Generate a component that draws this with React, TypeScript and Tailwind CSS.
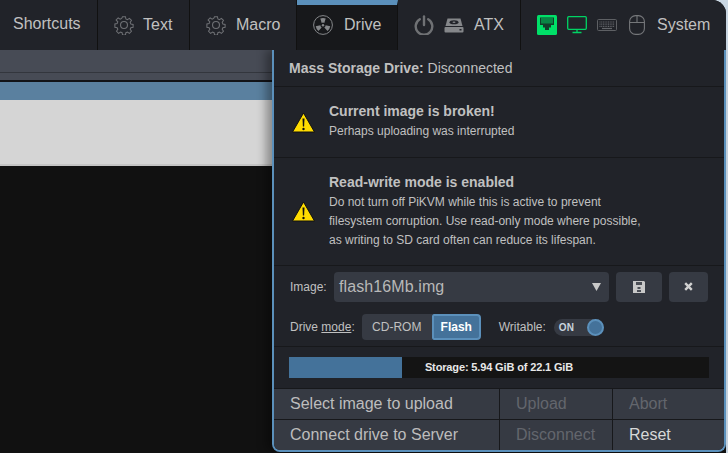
import React from "react";

const Gear = () => (
  <svg width="20" height="20" viewBox="0 0 22 22" fill="none" stroke="#6f7175" strokeWidth="1.200">
    <circle cx="11" cy="11" r="3.800" />
    <path d="M9.300 1.400h3.400l.5 2.600 1.800.8 2.300-1.500 2.400 2.400-1.500 2.300.8 1.800 2.600.5v3.400l-2.600.5-.8 1.800 1.500 2.300-2.400 2.400-2.300-1.500-1.800.8-.5 2.600H9.300l-.5-2.600-1.800-.8-2.300 1.500-2.400-2.400 1.500-2.300-.8-1.800-2.600-.5V9.700l2.600-.5.8-1.800L1.800 5.100l2.400-2.400 2.300 1.500 1.800-.8z" transform="translate(.6 .6) scale(.945)" />
  </svg>
);

const Warn = () => (
  <svg width="24" height="21" viewBox="0 0 24 21" className="shrink-0">
    <path d="M11.500 1 L22.500 20 H.5 Z" fill="#ffdc00" stroke="#111" strokeWidth="1" strokeLinejoin="round" />
    <path d="M10.500 6.500h2l-.4 8h-1.200z" fill="#111" />
    <circle cx="11.500" cy="17" r="1.200" fill="#111" />
  </svg>
);

const Tab = ({ children, className = "" }: { children: React.ReactNode; className?: string }) => (
  <div className={`h-full flex items-center border-r border-[#111] ${className}`}>{children}</div>
);

const Row = ({ children, className = "" }: { children: React.ReactNode; className?: string }) => (
  <div className={`border-b border-[#17181b] ${className}`}>{children}</div>
);

const Cell = ({ children, w, dim, bright }: { children: React.ReactNode; w: string; dim?: boolean; bright?: boolean }) => (
  <div className={`${w} flex items-center pl-4 pb-px text-[16px] border-r border-[#17181b] last:border-r-0 ${dim ? "text-[#63666d]" : bright ? "text-[#d8d8d8]" : "text-[#bdbdbd]"}`}>{children}</div>
);

export default function App() {
  return (
    <div className="w-[728px] h-[453px] overflow-hidden bg-[#c9d6e2] relative font-['Liberation_Sans',sans-serif] text-[#c0c0c0]">
      <div className="w-[726px] h-full bg-[#111111] rounded-tr-[14px]">
        {/* Menu bar */}
        <div className="h-[50px] bg-[#212329] flex text-[16px] rounded-tr-[14px] relative z-10">
          <Tab className="w-[98px] pl-[13px] pb-[2px]">Shortcuts</Tab>
          <Tab className="w-[92px] pl-[16px] gap-[9px]"><Gear />Text</Tab>
          <Tab className="w-[107px] pl-[16px] gap-[10px]"><Gear />Macro</Tab>
          <div className="w-[101px] h-full bg-[#17181b] border-r border-[#111] border-t-[5px] border-t-[#5b90bb] flex items-center pl-4 gap-[11px] pb-[5px]">
            <svg width="20" height="20" viewBox="0 0 20 20">
              <circle cx="10" cy="10" r="9.400" fill="none" stroke="#85878a" strokeWidth="1" />
              <circle cx="10" cy="10.300" r="1.200" fill="#85878a" />
              <g fill="#85878a">
                <path id="blade" d="M7.300 3.500a7 7 0 0 1 5.400 0L11.300 8a2.600 2.600 0 0 0-2.600 0z" />
                <path d="M7.300 3.500a7 7 0 0 1 5.400 0L11.300 8a2.600 2.600 0 0 0-2.600 0z" transform="rotate(120 10 10.300)" />
                <path d="M7.300 3.500a7 7 0 0 1 5.400 0L11.300 8a2.600 2.600 0 0 0-2.600 0z" transform="rotate(240 10 10.300)" />
              </g>
            </svg>
            <span>Drive</span>
          </div>
          <Tab className="w-[123px] pl-[16px]">
            <svg width="20" height="20" viewBox="0 0 20 20" fill="none" stroke="#6f7174" strokeWidth="2.400" strokeLinecap="round">
              <path d="M10 1.500v8.500" />
              <path d="M5.800 4.200a8.300 8.300 0 1 0 8.400 0" />
            </svg>
            <svg width="20" height="15" viewBox="0 0 20 15" className="ml-[10px]">
              <path d="M3.500 0.500h13L18.500 8H1.500z" fill="#85878a" />
              <ellipse cx="10" cy="4.300" rx="4.500" ry="2" fill="#212329" />
              <ellipse cx="10" cy="4.300" rx="1.500" ry=".8" fill="#85878a" />
              <rect x=".5" y="9" width="19" height="5.500" rx="1" fill="#85878a" />
              <rect x="15.500" y="11" width="2" height="1.500" fill="#212329" />
            </svg>
            <span className="ml-[10px]">ATX</span>
          </Tab>
          <div className="flex-1 h-full flex items-center pl-[16px]">
            <svg width="20" height="20" viewBox="0 0 20 20">
              <rect width="20" height="20" rx="1.500" fill="#00e068" />
              <path d="M3 2.500h14v7.500h-3v2.500h-2V15H8v-2.500H6V10H3z" fill="#123d2a" />
              <path d="M5 3v5.500M7 3v5.500M9 3v5.500M11 3v5.500M13 3v5.500M15 3v5.500" stroke="#00e068" strokeWidth=".9" />
            </svg>
            <svg width="20" height="18" viewBox="0 0 20 18" className="ml-[10px]" fill="none" stroke="#00d364" strokeWidth="1.300">
              <rect x=".7" y=".7" width="18.600" height="12.600" rx="1" />
              <path d="M10 13.500v2.500M5.500 16.500h9" />
            </svg>
            <svg width="20" height="12" viewBox="0 0 20 12" className="ml-[10px]">
              <rect x=".5" y=".5" width="19" height="11" rx="1" fill="none" stroke="#5e6064" />
              <path d="M2.500 3h15M2.500 5.200h15M2.500 7.400h15" stroke="#63656a" strokeWidth="1.200" strokeDasharray="1 .7" />
              <path d="M5 9.500h10" stroke="#63656a" strokeWidth="1.200" />
            </svg>
            <svg width="16" height="20" viewBox="0 0 16 20" className="ml-[12px]" fill="none" stroke="#75777a" strokeWidth="1.100">
              <rect x=".6" y=".6" width="14.800" height="18.800" rx="6" />
              <path d="M.6 7.500h14.800M8 .6v6.900" />
            </svg>
            <span className="ml-[12px]">System</span>
          </div>
        </div>

        {/* Background window */}
        <div>
          <div className="h-[32px] bg-[#474b55] border-b-2 border-[#121317]">
            <div className="h-[23px] border-b border-[#33363d]" />
          </div>
          <div className="h-[18px] bg-[#5a809f]" />
          <div className="h-[66px] bg-[#d5d5d5] border-b-2 border-[#c4c4c4]" />
        </div>
      </div>

      {/* Drive menu */}
      <div className="absolute left-[272px] top-[50px] w-[454px] h-[402px] bg-[#212329] border-x-2 border-b-2 border-[#5b90bb] rounded-b-[8px] overflow-hidden flex flex-col text-[12px] z-0 shadow-[-6px_0_10px_rgba(0,0,0,0.35)]">
        <Row className="h-[37px] pl-[15px] flex items-center text-[14px]">
          <b className="font-bold">Mass Storage Drive:</b><span className="ml-1">Disconnected</span>
        </Row>
        <Row className="h-[71px] pl-[18px] flex items-center gap-[13px]">
          <Warn />
          <div className="pb-[3px]">
            <div className="font-bold text-[14px] leading-[20px]">Current image is broken!</div>
            <div className="text-[12px] leading-[19px] mt-px">Perhaps uploading was interrupted</div>
          </div>
        </Row>
        <Row className="h-[108px] pl-[18px] flex items-center gap-[13px]">
          <Warn />
          <div className="pb-px">
            <div className="font-bold text-[14px] leading-[19px] mb-px">Read-write mode is enabled</div>
            <div className="leading-[19px]">Do not turn off PiKVM while this is active to prevent<br />filesystem corruption. Use read-only mode where possible,<br />as writing to SD card often can reduce its lifespan.</div>
          </div>
        </Row>
        <div className="h-[42px] pl-[16px] pt-[6px] flex items-start">
          <span className="mt-[6px] w-[38px]">Image:</span>
          <div className="w-[275px] h-[30px] ml-[6px] bg-[#363a43] rounded-[4px] flex items-center justify-between pl-[5px] pr-[8px] text-[16px] text-[#b8b8b8]">
            <span className="tracking-[0.1px] pb-px">flash16Mb.img</span>
            <svg width="9" height="8" viewBox="0 0 9 8"><path d="M0 0h9L4.500 8z" fill="#c8c8c8" /></svg>
          </div>
          <div className="w-[46px] h-[30px] ml-[7px] bg-[#363a43] rounded-[4px] flex items-center justify-center">
            <svg width="12" height="12" viewBox="0 0 12 12"><path d="M0 0h11l1 1v11H0z" fill="#c8c8c8" /><rect x="3" y="1" width="6" height="3" fill="#4a4d55" /><rect x="4.500" y="6" width="3" height="2" fill="#4a4d55" /><rect x="4" y="9" width="4" height="2" fill="#4a4d55" /></svg>
          </div>
          <div className="w-[39px] h-[30px] ml-[7px] bg-[#363a43] rounded-[4px] flex items-center justify-center">
            <svg width="9" height="9" viewBox="0 0 9 9" className="mb-[2px]"><path d="M1.200 1.200l6.600 6.600M7.800 1.200l-6.600 6.600" stroke="#d0d0d0" strokeWidth="2.400" /></svg>
          </div>
        </div>
        <Row className="h-[39px] pl-[16px] flex items-center">
          <span>Drive <span className="underline">mode</span>:</span>
          <div className="ml-[7px] flex h-[26px]">
            <div className="w-[70px] bg-[#363a43] rounded-l-[4px] flex items-center justify-center">CD-ROM</div>
            <div className="w-[49px] bg-[#44729a] border-2 border-[#5b90bb] rounded-[4px] rounded-l-[2px] flex items-center justify-center font-bold text-white">Flash</div>
          </div>
          <span className="ml-[18px]">Writable:</span>
          <div className="ml-[8px] w-[50px] h-[17px] rounded-full bg-[#363a43] relative text-[10px] font-bold text-[#c8d4de] flex items-center pl-[5px]">
            ON
            <span className="absolute right-0 top-0 w-[17px] h-[17px] rounded-full bg-[#44729a] border-2 border-[#5b90bb]" />
          </div>
        </Row>
        <Row className="h-[42px] pt-[10px] pl-[15px] pr-[15px]">
          <div className="h-[21px] bg-[#141414] flex items-center relative">
            <div className="absolute left-0 top-0 h-full w-[113px] bg-[#44729a]" />
            <span className="relative w-full text-center font-bold text-[11px] tracking-[-0.14px] text-[#e8e8e8]">Storage: 5.94 GiB of 22.1 GiB</span>
          </div>
        </Row>
        <div className="flex-1 bg-[#363a43] flex flex-col">
          <div className="h-[31px] flex border-b border-[#17181b]">
            <Cell w="w-[226px]">Select image to upload</Cell>
            <Cell w="w-[113px]" dim>Upload</Cell>
            <Cell w="flex-1" dim>Abort</Cell>
          </div>
          <div className="flex-1 flex">
            <Cell w="w-[226px]">Connect drive to Server</Cell>
            <Cell w="w-[113px]" dim>Disconnect</Cell>
            <Cell w="flex-1" bright>Reset</Cell>
          </div>
        </div>
      </div>
    </div>
  );
}
